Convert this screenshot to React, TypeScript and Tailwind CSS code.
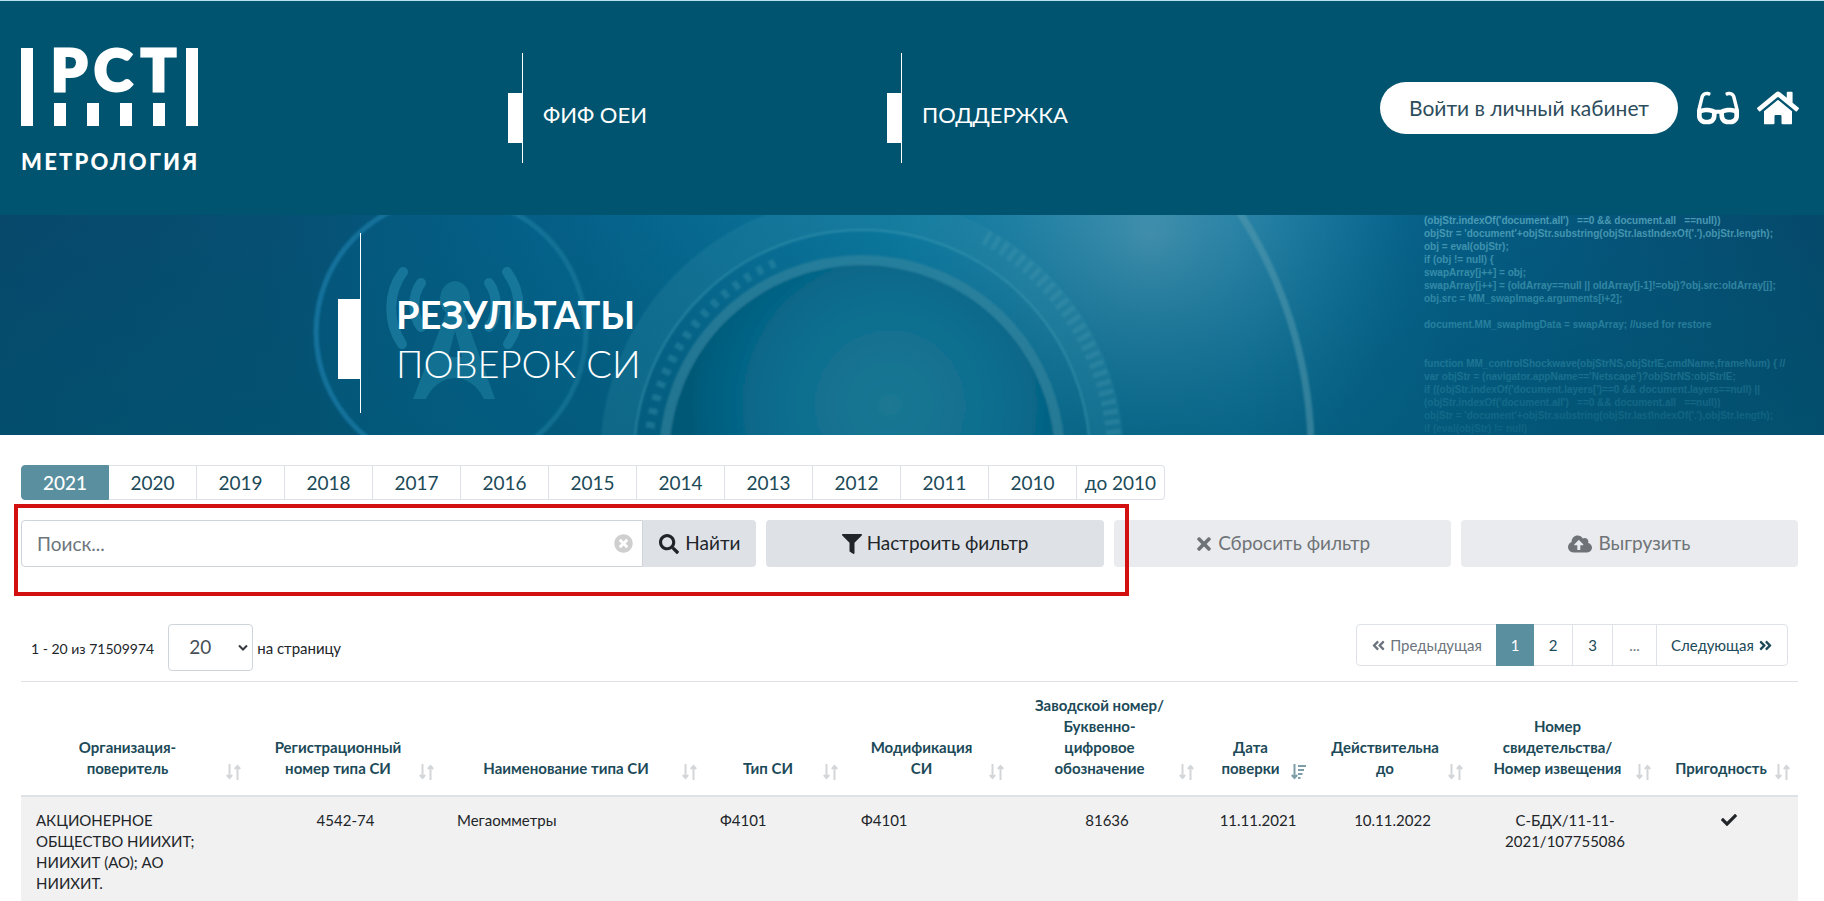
import type { ReactNode } from "react";
import {
  FaAngleDoubleLeft,
  FaAngleDoubleRight,
  FaCheck,
  FaCloudUploadAlt,
  FaFilter,
  FaGlasses,
  FaHome,
  FaSearch,
  FaTimes,
  FaTimesCircle,
} from "react-icons/fa";

const YEARS = [
  "2021", "2020", "2019", "2018", "2017", "2016", "2015",
  "2014", "2013", "2012", "2011", "2010", "до 2010",
];

interface Column {
  title: string;
  width: string;
  align: string;
  sorted?: boolean;
}

const COLUMNS: Column[] = [
  { title: "Организация-\nповеритель", width: "w-[228px]", align: "text-left" },
  { title: "Регистрационный\nномер типа СИ", width: "w-[193px]", align: "text-center" },
  { title: "Наименование типа СИ", width: "w-[263px]", align: "text-left" },
  { title: "Тип СИ", width: "w-[141px]", align: "text-left" },
  { title: "Модификация\nСИ", width: "w-[166px]", align: "text-left" },
  { title: "Заводской номер/\nБуквенно-\nцифровое\nобозначение", width: "w-[190px]", align: "text-center" },
  { title: "Дата\nповерки", width: "w-[112px]", align: "text-center", sorted: true },
  { title: "Действительна\nдо", width: "w-[157px]", align: "text-center" },
  { title: "Номер\nсвидетельства/\nНомер извещения", width: "w-[188px]", align: "text-center" },
  { title: "Пригодность", width: "w-[139px]", align: "text-center" },
];

const ROWS: ReactNode[][] = [
  [
    "АКЦИОНЕРНОЕ\nОБЩЕСТВО НИИХИТ;\nНИИХИТ (АО); АО\nНИИХИТ.",
    "4542-74",
    "Мегаомметры",
    "Ф4101",
    "Ф4101",
    "81636",
    "11.11.2021",
    "10.11.2022",
    "С-БДХ/11-11-\n2021/107755086",
    <FaCheck className="mx-auto mt-[2px] text-base" aria-label="Пригодно" />,
  ],
];

// строки кода на фоне баннера, пустые строки - пропуски
const CODE = [
  "(objStr.indexOf('document.all')   ==0 && document.all   ==null))",
  "objStr = 'document'+objStr.substring(objStr.lastIndexOf('.'),objStr.length);",
  "obj = eval(objStr);",
  "if (obj != null) {",
  "swapArray[j++] = obj;",
  "swapArray[j++] = (oldArray==null || oldArray[j-1]!=obj)?obj.src:oldArray[j];",
  "obj.src = MM_swapImage.arguments[i+2];",
  "",
  "document.MM_swapImgData = swapArray; //used for restore",
  "",
  "",
  "function MM_controlShockwave(objStrNS,objStrIE,cmdName,frameNum) { //",
  "var objStr = (navigator.appName=='Netscape')?objStrNS:objStrIE;",
  "if ((objStr.indexOf('document.layers[')==0 && document.layers==null) ||",
  "(objStr.indexOf('document.all')   ==0 && document.all   ==null))",
  "objStr = 'document'+objStr.substring(objStr.lastIndexOf('.'),objStr.length);",
  "if (eval(objStr) != null)",
];

function Logo() {
  return (
    <a href="#" aria-label="РСТ Метрология" className="block pt-2 text-white">
      <svg viewBox="0 0 177 78" className="h-[78px] w-[177px] overflow-visible" fill="currentColor">
        <rect x="0" y="0" width="12" height="78" />
        <rect x="165" y="0" width="12" height="78" />
        <rect x="33" y="55" width="12" height="23" />
        <rect x="66" y="55" width="12" height="23" />
        <rect x="99" y="55" width="12" height="23" />
        <rect x="132" y="55" width="12" height="23" />
        <g fontFamily="Lato, sans-serif" fontWeight="900" fontSize="58" stroke="currentColor" strokeWidth="3">
          <text x="30" y="43">Р</text>
          <text x="73" y="43">С</text>
          <text x="120" y="43">Т</text>
        </g>
      </svg>
      <span className="mt-[22px] block text-[22px] leading-7 font-black tracking-widest">МЕТРОЛОГИЯ</span>
    </a>
  );
}

function NavItem({ children }: { children: ReactNode }) {
  return (
    <a href="#" className="flex h-[110px] items-start text-[22px] text-white">
      <span className="mt-10 h-[50px] w-[14px] bg-white" />
      <span className="mr-5 h-full w-px bg-white" />
      <span className="mt-10 leading-[44px]">{children}</span>
    </a>
  );
}

function Header() {
  return (
    <header className="grid h-[215px] grid-cols-[487fr_379fr_379fr_533fr] items-center border-t border-[#b5e2ef] bg-[#00546f] pr-[25px] pl-[21px]">
      <Logo />
      <NavItem>ФИФ ОЕИ</NavItem>
      <NavItem>ПОДДЕРЖКА</NavItem>
      <div className="flex items-center justify-end text-white">
        <button className="h-[52px] rounded-[26px] bg-white px-[29px] text-[21px] whitespace-nowrap text-[#2c4d5c]">
          Войти в личный кабинет
        </button>
        <button aria-label="Версия для слабовидящих" className="ml-[19px]">
          <FaGlasses className="h-[38px] w-[42px]" />
        </button>
        <button aria-label="На главную" className="ml-[18px]">
          <FaHome className="h-[38px] w-[42px]" />
        </button>
      </div>
    </header>
  );
}

function BannerArt() {
  return (
    <svg
      viewBox="0 0 1824 220"
      preserveAspectRatio="xMidYMid slice"
      className="absolute inset-0 h-full w-full"
      aria-hidden="true"
    >
      <defs>
        <linearGradient id="base" x1="0" x2="1" y1="0" y2="0">
          <stop offset="0" stopColor="#07486b" />
          <stop offset="0.15" stopColor="#064f73" />
          <stop offset="0.32" stopColor="#056189" />
          <stop offset="0.5" stopColor="#0c789e" />
          <stop offset="0.68" stopColor="#0f749d" />
          <stop offset="0.8" stopColor="#055c84" />
          <stop offset="1" stopColor="#05496b" />
        </linearGradient>
        <linearGradient id="shade" x1="0" x2="0" y1="0" y2="1">
          <stop offset="0" stopColor="#00546f" stopOpacity="0" />
          <stop offset="1" stopColor="#00546f" stopOpacity="0.5" />
        </linearGradient>
        <radialGradient id="glow" gradientUnits="userSpaceOnUse" cx="1150" cy="20" r="260">
          <stop offset="0" stopColor="#5499b3" stopOpacity="0.75" />
          <stop offset="0.5" stopColor="#3e8fae" stopOpacity="0.4" />
          <stop offset="1" stopColor="#2b86aa" stopOpacity="0" />
        </radialGradient>
        <radialGradient id="lens" gradientUnits="userSpaceOnUse" cx="890" cy="190" r="200">
          <stop offset="0" stopColor="#1b7893" />
          <stop offset="0.6" stopColor="#0c6c8e" />
          <stop offset="0.85" stopColor="#026182" />
          <stop offset="1" stopColor="#005977" />
        </radialGradient>
        <linearGradient id="codeFade" gradientUnits="userSpaceOnUse" x1="0" y1="0" x2="0" y2="220">
          <stop offset="0" stopColor="#58a8bf" stopOpacity="0.85" />
          <stop offset="0.5" stopColor="#3d98b2" stopOpacity="0.6" />
          <stop offset="1" stopColor="#258099" stopOpacity="0.3" />
        </linearGradient>
        <linearGradient id="ring" gradientUnits="userSpaceOnUse" x1="314" y1="0" x2="588" y2="0">
          <stop offset="0" stopColor="#1c86b5" stopOpacity="0.6" />
          <stop offset="1" stopColor="#2b8fae" stopOpacity="0.35" />
        </linearGradient>
        <filter id="soft" x="-10%" y="-10%" width="120%" height="120%">
          <feGaussianBlur stdDeviation="1.2" />
        </filter>
      </defs>
      <rect width="1824" height="220" fill="url(#base)" />
      <rect width="1824" height="220" fill="url(#glow)" />
      <rect width="1824" height="220" fill="url(#shade)" />

      {/* круг и вышка */}
      <circle cx="451" cy="117" r="135" fill="#0a7aa8" fillOpacity="0.1" stroke="url(#ring)" strokeWidth="5" filter="url(#soft)" />
      <g fill="none" stroke="#2387aa" strokeOpacity="0.6" strokeWidth="10" strokeLinecap="round">
        <path d="M403 57c-15 20-16 50-1 72" />
        <path d="M421 68c-9 12-9 32 0 44" />
        <path d="M507 57c15 20 16 50 1 72" />
        <path d="M489 68c9 12 9 32 0 44" />
      </g>
      <path
        d="M455 66a16 18 0 0 1 9 32l31 86h-11c-5-12-17-21-29-21s-24 9-29 21h-13l33-86a16 18 0 0 1 9-32zm0 50l-7 26h14z"
        fill="#1f83a3"
        fillOpacity="0.55"
      />

      {/* объектив */}
      <g filter="url(#soft)">
        <circle cx="862" cy="243" r="245" fill="none" stroke="#2a8ba6" strokeOpacity="0.25" strokeWidth="34" />
        <circle cx="862" cy="243" r="228" fill="none" stroke="#4aa3bb" strokeOpacity="0.45" strokeWidth="2" />
        <circle cx="862" cy="243" r="193" fill="url(#lens)" />
        <circle cx="862" cy="243" r="198" fill="none" stroke="#3a88a0" strokeOpacity="0.55" strokeWidth="10" />
        <path
          d="M650 213A214 214 0 0 1 775 48"
          fill="none"
          stroke="#378fa9"
          strokeOpacity="0.45"
          strokeWidth="9"
          strokeDasharray="6 8"
        />
        <path
          d="M985 22A253 253 0 0 1 1114 225"
          fill="none"
          stroke="#4a9cb3"
          strokeOpacity="0.3"
          strokeWidth="15"
          strokeDasharray="5 5"
        />
        <path d="M1238 -5A449 449 0 0 1 1311 225" fill="none" stroke="#5a9db0" strokeOpacity="0.5" strokeWidth="7" />
      </g>

      <g fontFamily="'Liberation Sans', sans-serif" fontSize="10" fontWeight="700" fill="url(#codeFade)">
        {CODE.map((line, i) => (
          <text key={i} x="1424" y={9 + i * 13} xmlSpace="preserve">
            {line}
          </text>
        ))}
      </g>
    </svg>
  );
}

function Banner() {
  return (
    <section className="relative h-[220px] overflow-hidden bg-[#00587a]">
      <BannerArt />
      <div className="relative flex h-full items-start pt-[18px] pl-[338px] text-white">
        <span className="mt-[66px] h-20 w-[22px] bg-white" />
        <span className="h-[180px] w-px bg-white" />
        <h1 className="mt-[57px] ml-[35px] text-[38px] leading-[49px]">
          <span className="block font-bold">РЕЗУЛЬТАТЫ</span>
          <span className="block font-light">ПОВЕРОК СИ</span>
        </h1>
      </div>
    </section>
  );
}

function YearTabs() {
  return (
    <nav className="flex text-[19px] leading-[33px] text-[#1c4a58]">
      {YEARS.map((year, i) => (
        <button
          key={year}
          className={
            i === 0
              ? "w-[88px] rounded-l border border-[#5a8fa0] bg-[#5a8fa0] font-medium text-white"
              : "w-[88px] border-y border-r border-[#dee2e6] whitespace-nowrap last:rounded-r"
          }
        >
          {year}
        </button>
      ))}
    </nav>
  );
}

function SearchBar() {
  return (
    <div className="relative mt-5 grid grid-cols-[735fr_337fr_337fr_337fr] gap-[10px] text-[19px] text-[#212529]">
      <form className="flex h-[47px]">
        <label className="relative flex-1">
          <input
            type="text"
            aria-label="Поиск"
            placeholder="Поиск..."
            className="h-full w-full rounded-l border border-[#ced4da] px-[15px] placeholder:text-[#6c757d]"
          />
          <FaTimesCircle className="absolute top-[14px] right-[10px] text-[19px] text-[#cfcfcf]" />
        </label>
        <button type="button" className="flex w-[113px] items-center justify-center gap-[6px] rounded-r bg-[#dee2e6]">
          <FaSearch className="text-[20px]" />
          Найти
        </button>
      </form>
      <button className="flex items-center justify-center gap-[5px] rounded bg-[#dee2e6]">
        <FaFilter className="text-[20px]" />
        Настроить фильтр
      </button>
      <button disabled className="flex items-center justify-center gap-1 rounded bg-[#e9ebee] text-[#6f7377]">
        <FaTimes className="text-[20px]" />
        Сбросить фильтр
      </button>
      <button disabled className="flex items-center justify-center gap-[6px] rounded bg-[#e9ebee] text-[#6f7377]">
        <FaCloudUploadAlt className="text-[24px]" />
        Выгрузить
      </button>

      {/* красная рамка вокруг поиска и фильтра */}
      <div className="pointer-events-none absolute -top-4 right-[669px] -left-[7px] h-[92px] border-4 border-[#d21010]" />
    </div>
  );
}

function Pager() {
  const cell = "flex h-full items-center justify-center border-r border-[#dee2e6] last:border-r-0";
  return (
    <div className="mt-[57px] flex items-start justify-between pr-[10px] pl-[10px] text-[15px] text-[#212529]">
      <div className="flex items-baseline">
        <span className="text-[14px]">1 - 20 из 71509974</span>
        <span className="relative mr-1 ml-[14px]">
          <select
            aria-label="Записей на странице"
            className="h-[47px] w-[85px] appearance-none rounded border border-[#ced4da] bg-white pl-5 text-[19px] text-[#495057]"
          >
            <option>20</option>
          </select>
          <svg
            viewBox="0 0 10 8"
            className="pointer-events-none absolute top-5 right-[5px] h-2 w-[10px]"
            fill="none"
            stroke="#343a40"
            strokeWidth="2"
          >
            <path d="M1 1.5l4 4 4-4" />
          </svg>
        </span>
        <span>на страницу</span>
      </div>
      <div className="flex h-[42px] rounded border border-[#dee2e6] text-[#1c4a58]">
        <button disabled className={`${cell} w-[139px] gap-1 border-r-0 text-[#6c757d]`}>
          <FaAngleDoubleLeft />
          Предыдущая
        </button>
        <button className="-my-px h-[42px] w-[38px] bg-[#5a8fa0] text-white">1</button>
        <button className={`${cell} w-[39px]`}>2</button>
        <button className={`${cell} w-10`}>3</button>
        <button disabled className={`${cell} w-11 text-[#6c757d]`}>...</button>
        <button className={`${cell} w-[130px] gap-1`}>
          Следующая
          <FaAngleDoubleRight />
        </button>
      </div>
    </div>
  );
}

function SortIcon({ sorted }: { sorted?: boolean }) {
  return (
    <svg
      viewBox="0 0 15 16"
      className={`absolute right-[8px] bottom-[15px] h-4 w-[15px] ${sorted ? "text-[#7d9ea8]" : "text-[#d3d6d9]"}`}
      fill="none"
      stroke="currentColor"
      strokeWidth="2"
    >
      <path d="M3.5 0v13M.8 11l2.7 3 2.7-3" />
      {sorted ? <path d="M7 2h8M7 6h6M7 10h4.500M7 14h2.500" /> : <path d="M11.500 16V3M8.800 5l2.700-3 2.700 3" />}
    </svg>
  );
}

function ResultsTable() {
  return (
    <table className="mt-[10px] w-full table-fixed border-t border-[#dee2e6] text-[15px] leading-[21px] text-[#212529]">
      <thead>
        <tr className="border-b-2 border-[#dee2e6] text-[#1c4a58]">
          {COLUMNS.map((col) => (
            <th
              key={col.title}
              className={`relative pt-[13px] pr-[30px] pb-4 pl-[15px] text-center align-bottom font-bold whitespace-pre ${col.width}`}
            >
              {col.title}
              <SortIcon sorted={col.sorted} />
            </th>
          ))}
        </tr>
      </thead>
      <tbody>
        {ROWS.map((row, r) => (
          <tr key={r} className="bg-[#f1f1f1]">
            {row.map((value, i) => (
              <td key={i} className={`px-[15px] py-[13px] align-top whitespace-pre ${COLUMNS[i].align}`}>
                {value}
              </td>
            ))}
          </tr>
        ))}
      </tbody>
    </table>
  );
}

export default function App() {
  return (
    <div className="min-h-screen bg-white font-[Lato,'Noto_Sans',sans-serif]">
      <Header />
      <Banner />
      <main className="pt-[30px] pr-[26px] pl-[21px]">
        <YearTabs />
        <SearchBar />
        <Pager />
        <ResultsTable />
      </main>
    </div>
  );
}
